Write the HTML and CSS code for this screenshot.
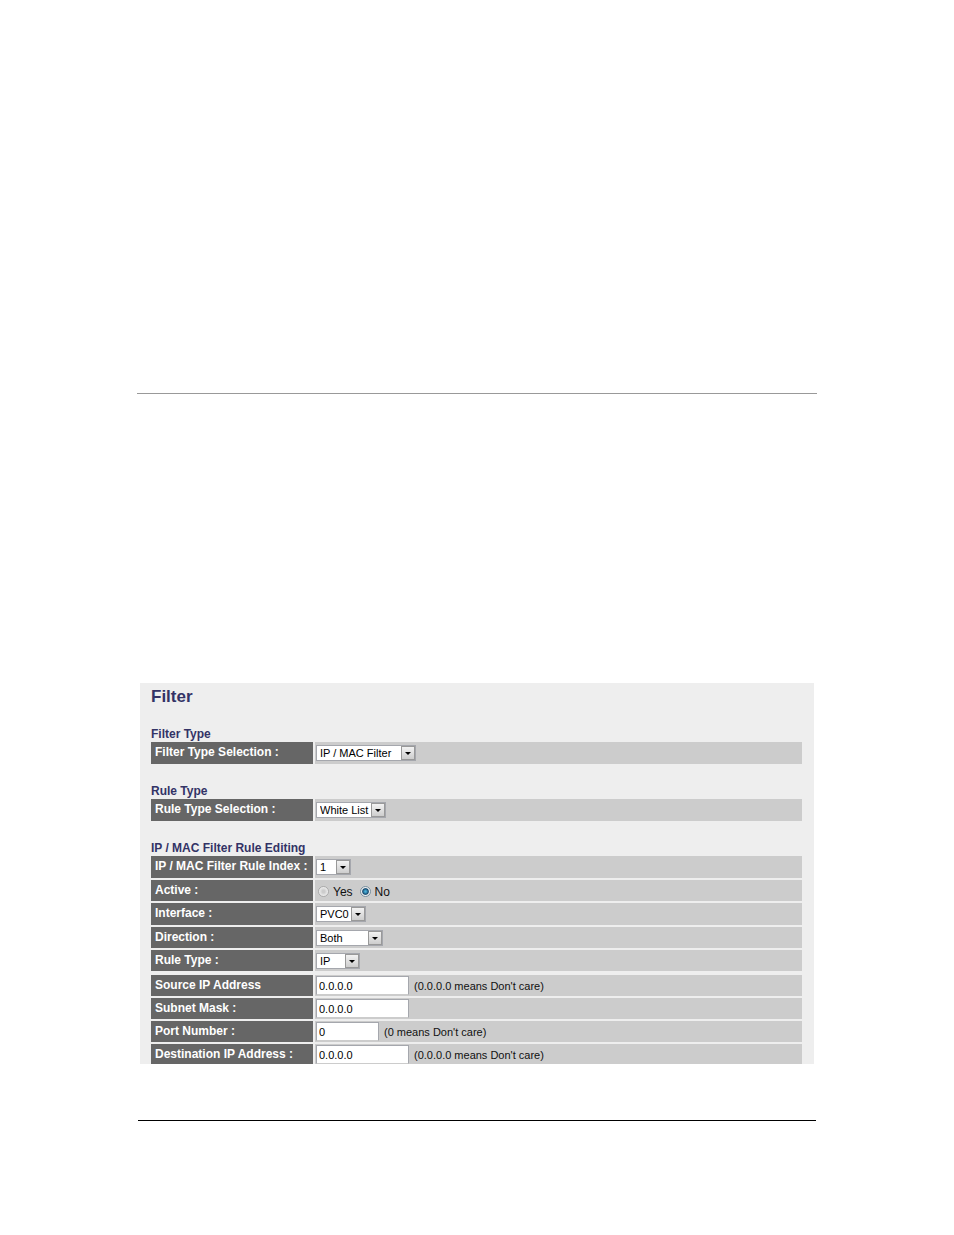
FILE: index.html
```html
<!DOCTYPE html>
<html lang="en">
<head>
<meta charset="UTF-8">
<meta name="viewport" content="width=device-width, initial-scale=1.0">
<title>Filter</title>
<link rel="stylesheet" href="styles.css">
</head>
<body>

<div class="page">
    <hr class="rule-top">

    <form class="panel">
        <h1 class="title">Filter</h1>

        <!-- Filter type -->
        <h2 class="heading">Filter Type</h2>
        <div class="group">
            <div class="row row-tall">
                <label class="name" for="filterType">Filter Type Selection :</label>
                <div class="value">
                    <select class="select w-100" id="filterType"><option>IP / MAC Filter</option></select>
                </div>
            </div>
        </div>

        <!-- Rule type -->
        <h2 class="heading">Rule Type</h2>
        <div class="group">
            <div class="row row-tall">
                <label class="name" for="listType">Rule Type Selection :</label>
                <div class="value">
                    <select class="select w-70" id="listType"><option>White List</option><option>Black List</option></select>
                </div>
            </div>
        </div>

        <!-- Rule editing -->
        <h2 class="heading">IP / MAC Filter Rule Editing</h2>
        <div class="group">
            <div class="row row-tall">
                <label class="name" for="ruleIndex">IP / MAC Filter Rule Index :</label>
                <div class="value">
                    <select class="select w-35" id="ruleIndex"><option>1</option><option>2</option></select>
                </div>
            </div>
            <div class="row" role="radiogroup" aria-labelledby="activeName">
                <div class="name" id="activeName">Active :</div>
                <div class="value">
                    <label class="choice"><input class="radio" type="radio" name="active" value="yes">Yes</label>
                    <label class="choice"><input class="radio" type="radio" name="active" value="no" checked>No</label>
                </div>
            </div>
            <div class="row row-tall">
                <label class="name" for="interface">Interface :</label>
                <div class="value">
                    <select class="select w-50" id="interface"><option>PVC0</option><option>PVC1</option></select>
                </div>
            </div>
            <div class="row">
                <label class="name" for="direction">Direction :</label>
                <div class="value">
                    <select class="select w-67" id="direction"><option>Both</option><option>Incoming</option></select>
                </div>
            </div>
            <div class="row">
                <label class="name" for="ruleType">Rule Type :</label>
                <div class="value">
                    <select class="select w-44" id="ruleType"><option>IP</option><option>MAC</option></select>
                </div>
            </div>
        </div>

        <div class="group">
            <div class="row">
                <label class="name" for="sourceIp">Source IP Address</label>
                <div class="value">
                    <input class="text" type="text" id="sourceIp" value="0.0.0.0">
                    <span class="note">(0.0.0.0 means Don't care)</span>
                </div>
            </div>
            <div class="row">
                <label class="name" for="sourceMask">Subnet Mask :</label>
                <div class="value">
                    <input class="text" type="text" id="sourceMask" value="0.0.0.0">
                </div>
            </div>
            <div class="row">
                <label class="name" for="sourcePort">Port Number :</label>
                <div class="value">
                    <input class="text text-short" type="text" id="sourcePort" value="0">
                    <span class="note">(0 means Don't care)</span>
                </div>
            </div>
            <div class="row row-last">
                <label class="name" for="destIp">Destination IP Address :</label>
                <div class="value">
                    <input class="text" type="text" id="destIp" value="0.0.0.0">
                    <span class="note">(0.0.0.0 means Don't care)</span>
                </div>
            </div>
        </div>
    </form>

    <hr class="rule-bottom">
</div>

</body>
</html>
```
FILE: styles.css
```css
* {
    box-sizing: border-box;
}

body {
    margin: 0;
    background-color: #fff;
    font-family: "Liberation Sans", Arial, sans-serif;
    font-size: 12px;
    color: #111;
}

.page {
    padding: 393px 137px 114px;
}

.rule-top,
.rule-bottom {
    height: 1px;
    border: 0;
    margin: 0;
    background-color: #999;
}

.rule-bottom {
    margin: 0 1px;
    background-color: #000;
}

.panel {
    margin: 289px 3px 56px;
    padding: 4px 12px 0 11px;
    background-color: #eee;
}

.title {
    margin: 0;
    font-size: 17px;
    line-height: 20px;
    color: #336;
}

.heading {
    margin: 20px 0 0;
    font-size: 12px;
    line-height: 15px;
    color: #336;
}

.group {
    display: flex;
    flex-direction: column;
    gap: 2px;
}

.group + .group {
    margin-top: 4px;
}

.row {
    display: grid;
    grid-template-columns: 162px 1fr;
    column-gap: 2px;
    height: 21px;
}

.row-tall {
    height: 22px;
}

/* Cut off by the bottom edge of the panel */
.row-last {
    height: 20px;
    overflow: hidden;
}

.name {
    padding-left: 4px;
    background-color: #666;
    color: #fff;
    font-weight: bold;
    line-height: 21px;
    white-space: nowrap;
}

.value {
    display: flex;
    align-items: center;
    padding-left: 1px;
    background-color: #ccc;
}

.select {
    appearance: none;
    height: 16px;
    margin: 0;
    padding: 0 15px 0 3px;
    border: 1px solid #a5a7ad;
    border-radius: 0;
    background: #fff url("data:image/svg+xml,%3Csvg xmlns='http://www.w3.org/2000/svg' width='14' height='14'%3E%3Cdefs%3E%3ClinearGradient id='g' x2='0' y2='1'%3E%3Cstop stop-color='%23f4f4f4'/%3E%3Cstop offset='1' stop-color='%23ccc'/%3E%3C/linearGradient%3E%3C/defs%3E%3Crect x='.5' y='.5' width='13' height='13' fill='url(%23g)' stroke='%23999'/%3E%3Cpath d='M4 6h6L7 9z' fill='%23000'/%3E%3C/svg%3E") no-repeat right center;
    font-family: inherit;
    font-size: 11px;
    line-height: 14px;
    color: #000;
}

.w-35 {
    width: 35px;
}

.w-44 {
    width: 44px;
}

.w-50 {
    width: 50px;
}

.w-67 {
    width: 67px;
}

.w-70 {
    width: 70px;
}

.w-100 {
    width: 100px;
}

.choice {
    display: flex;
    align-items: center;
    gap: 4px;
    margin: 2px 5px 0 2px;
}

.radio {
    appearance: none;
    width: 11px;
    height: 11px;
    margin: 0;
    border: 1px solid #aaa;
    border-radius: 50%;
    background: radial-gradient(circle, #ccc 20%, #eee 70%);
}

.radio:checked {
    border-color: #7890a0;
    background: radial-gradient(circle, #4ab0d8 10%, #174a70 45%, #eee 60%);
}

.text {
    width: 93px;
    height: 19px;
    margin: 0;
    padding: 0 2px;
    border: 1px solid #a5a7ad;
    border-bottom-color: #ccc;
    font-family: inherit;
    font-size: 11px;
    color: #000;
}

.text-short {
    width: 63px;
}

.note {
    margin-left: 5px;
    font-size: 11px;
}
```
